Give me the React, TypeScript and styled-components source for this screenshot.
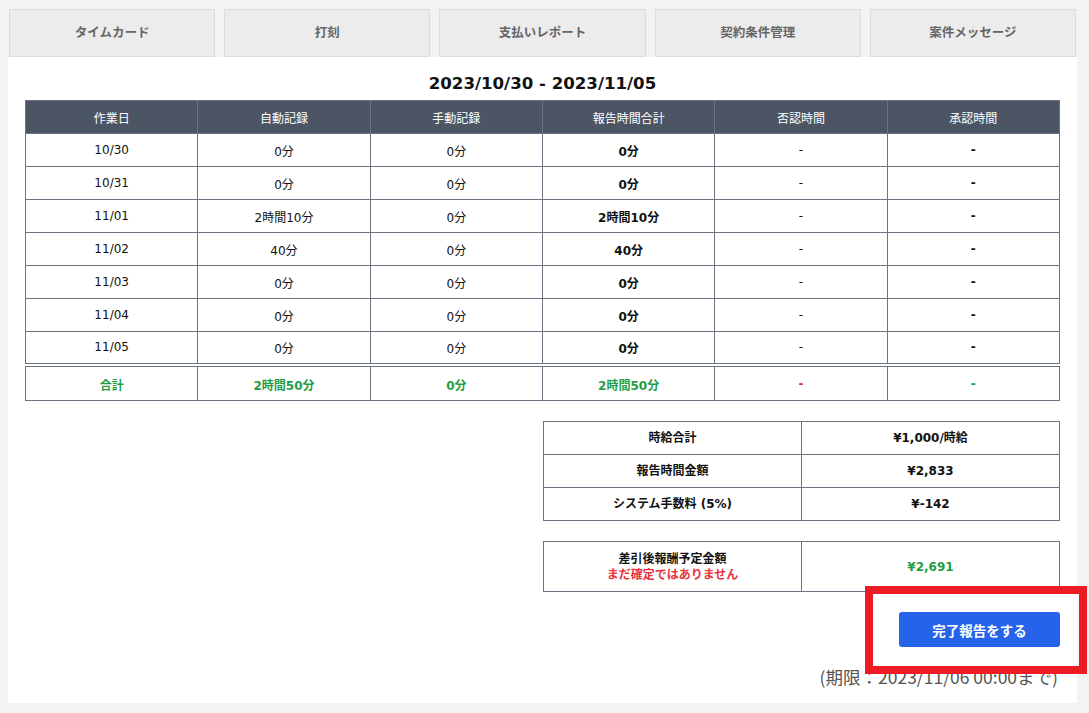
import React from "react";
import styled, { createGlobalStyle } from "styled-components";

const GlobalStyle = createGlobalStyle`
  html, body {
    margin: 0;
    padding: 0;
    background: #f2f3f5;
  }
  body {
    font-family: "DejaVu Sans", "Noto Sans CJK JP", sans-serif;
    color: #111;
  }
  * {
    box-sizing: border-box;
  }
`;

const Page = styled.div`
  width: 1089px;
  height: 713px;
  padding: 9px 12px 10px 8px;
  display: flex;
  flex-direction: column;
  overflow: hidden;
`;

const Tabs = styled.nav`
  display: flex;
  gap: 9px;
  padding: 0 1px;
  height: 48px;
`;

const Tab = styled.button`
  flex: 1 1 0;
  background: #ececec;
  border: 1px solid #dcdcdc;
  color: #666;
  padding: 0 0 4px;
  font-family: "DejaVu Sans", "Noto Sans CJK JP", sans-serif;
  font-size: 12.5px;
  font-weight: 700;
  cursor: pointer;
`;

const Panel = styled.section`
  flex: 1;
  background: #fff;
  padding: 15px 17px 0 17px;
  display: flex;
  flex-direction: column;
`;

const Period = styled.h2`
  margin: 0 0 4px;
  height: 24px;
  line-height: 24px;
  text-align: center;
  font-size: 16.6px;
  font-weight: 700;
  color: #111;
`;

const Grid = styled.table`
  width: 100%;
  border-collapse: collapse;
  table-layout: fixed;
  font-size: 12px;
`;

const Th = styled.th`
  background: #4b5563;
  color: #fff;
  font-weight: 400;
  height: 33px;
  padding: 0;
  border: 1px solid #6b7280;
`;

const Td = styled.td<{ $bold?: boolean; $tone?: "green" | "red" }>`
  height: 33px;
  padding: 0;
  text-align: center;
  border: 1px solid #6b7280;
  font-weight: ${p => (p.$bold ? 700 : 400)};
  color: ${p =>
    p.$tone === "green" ? "#1f9d47" : p.$tone === "red" ? "#e0294a" : "#111"};
`;

const TotalRow = styled.tr`
  td {
    height: 36px;
    padding-top: 2px;
    border-top: 4px double #6b7280;
  }
`;

const Summary = styled.table`
  width: 517px;
  align-self: flex-end;
  border-collapse: collapse;
  table-layout: fixed;
  font-size: 12px;
  font-weight: 700;
  margin-top: 20px;
`;

const SummaryCell = styled.td<{ $tone?: "green"; $tall?: boolean }>`
  height: ${p => (p.$tall ? 50 : 33)}px;
  padding: 0;
  text-align: center;
  border: 1px solid #6b7280;
  color: ${p => (p.$tone === "green" ? "#1f9d47" : "#111")};
  line-height: 16px;
`;

const Warning = styled.span`
  display: block;
  color: #e8323c;
`;

const Actions = styled.div`
  position: relative;
  align-self: flex-end;
  margin-top: 20px;
  display: flex;
  flex-direction: column;
  align-items: flex-end;
`;

const CompleteButton = styled.button`
  width: 161px;
  height: 35px;
  background: #2563eb;
  color: #fff;
  border: none;
  border-radius: 3px;
  font-family: "Noto Sans CJK JP", sans-serif;
  font-size: 13.5px;
  font-weight: 700;
  cursor: pointer;
`;

const Deadline = styled.p`
  margin: 19px 2px 0 0;
  font-family: "Noto Sans CJK JP", sans-serif;
  font-size: 17.5px;
  line-height: 22px;
  color: #555;
  white-space: nowrap;
`;

const Highlight = styled.div`
  position: absolute;
  top: -26px;
  right: -27px;
  width: 222px;
  height: 88px;
  border: 8px solid #ed1c24;
  pointer-events: none;
`;

const tabs = ["タイムカード", "打刻", "支払いレポート", "契約条件管理", "案件メッセージ"];

const headers = ["作業日", "自動記録", "手動記録", "報告時間合計", "否認時間", "承認時間"];

const days = [
  { date: "10/30", auto: "0分", manual: "0分", total: "0分" },
  { date: "10/31", auto: "0分", manual: "0分", total: "0分" },
  { date: "11/01", auto: "2時間10分", manual: "0分", total: "2時間10分" },
  { date: "11/02", auto: "40分", manual: "0分", total: "40分" },
  { date: "11/03", auto: "0分", manual: "0分", total: "0分" },
  { date: "11/04", auto: "0分", manual: "0分", total: "0分" },
  { date: "11/05", auto: "0分", manual: "0分", total: "0分" }
];

const fees = [
  ["時給合計", "¥1,000/時給"],
  ["報告時間金額", "¥2,833"],
  ["システム手数料 (5%)", "¥-142"]
];

const App = () => (
  <>
    <GlobalStyle />
    <Page>
      <Tabs>
        {tabs.map(t => (
          <Tab key={t}>{t}</Tab>
        ))}
      </Tabs>
      <Panel>
        <Period>2023/10/30 - 2023/11/05</Period>
        <Grid>
          <thead>
            <tr>
              {headers.map(h => (
                <Th key={h}>{h}</Th>
              ))}
            </tr>
          </thead>
          <tbody>
            {days.map(d => (
              <tr key={d.date}>
                <Td>{d.date}</Td>
                <Td>{d.auto}</Td>
                <Td>{d.manual}</Td>
                <Td $bold>{d.total}</Td>
                <Td>-</Td>
                <Td $bold>-</Td>
              </tr>
            ))}
            <TotalRow>
              <Td $bold $tone="green">合計</Td>
              <Td $bold $tone="green">2時間50分</Td>
              <Td $bold $tone="green">0分</Td>
              <Td $bold $tone="green">2時間50分</Td>
              <Td $bold $tone="red">-</Td>
              <Td $bold $tone="green">-</Td>
            </TotalRow>
          </tbody>
        </Grid>

        <Summary>
          <tbody>
            {fees.map(([label, value]) => (
              <tr key={label}>
                <SummaryCell>{label}</SummaryCell>
                <SummaryCell>{value}</SummaryCell>
              </tr>
            ))}
          </tbody>
        </Summary>

        <Summary>
          <tbody>
            <tr>
              <SummaryCell $tall>
                差引後報酬予定金額
                <Warning>まだ確定ではありません</Warning>
              </SummaryCell>
              <SummaryCell $tall $tone="green">¥2,691</SummaryCell>
            </tr>
          </tbody>
        </Summary>

        <Actions>
          <CompleteButton>完了報告をする</CompleteButton>
          <Deadline>(期限：2023/11/06 00:00まで)</Deadline>
          <Highlight />
        </Actions>
      </Panel>
    </Page>
  </>
);

export default App;
